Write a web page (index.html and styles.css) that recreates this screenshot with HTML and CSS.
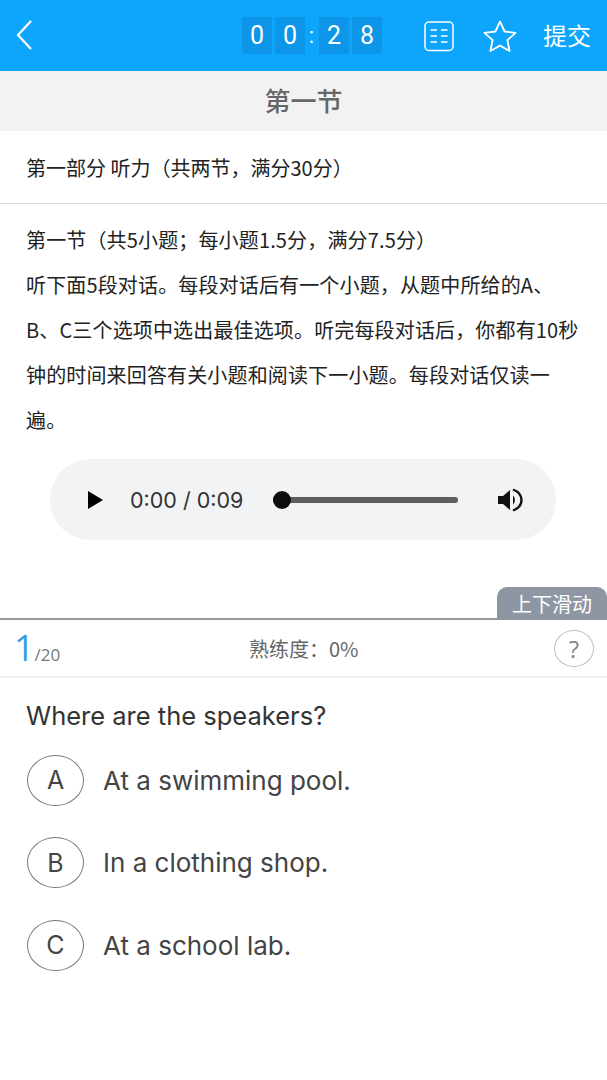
FILE: index.html
```html
<!DOCTYPE html>
<html lang="zh">
<head>
<meta charset="utf-8">
<title>第一节</title>
<link rel="stylesheet" href="styles.css">
</head>
<body>
<header class="topbar">
  <svg class="back" width="18" height="32" viewBox="0 0 18 32"><path d="M16 2 3 16 16 30" fill="none" stroke="#fff" stroke-width="2.200"/></svg>
  <div class="timer">
    <span class="digit">0</span><span class="digit">0</span><span class="colon">:</span><span class="digit">2</span><span class="digit">8</span>
  </div>
  <svg class="sheet" width="32" height="32" viewBox="0 0 32 32"><rect x="2" y="2" width="28" height="28.500" rx="4" fill="none" stroke="#fff" stroke-width="1.500"/><path d="M7.500 10h6.500M18 10h6.500M7.500 16h6.500M18 16h6.500M7.500 22h6.500M18 22h6.500" stroke="#fff" stroke-width="1.500"/></svg>
  <svg class="star" width="36" height="34" viewBox="0 0 36 34"><path d="M18 2.500 22.600 12.500 33.500 13.800 25.400 21.200 27.600 32 18 26.600 8.400 32 10.600 21.200 2.500 13.800 13.400 12.500Z" fill="none" stroke="#fff" stroke-width="1.800" stroke-linejoin="round"/></svg>
  <span class="submit">提交</span>
</header>

<div class="section-title">第一节</div>

<div class="part">第一部分 听力（共两节，满分30分）</div>

<section class="passage">
  <p>第一节（共5小题；每小题1.5分，满分7.5分）</p>
  <p>听下面5段对话。每段对话后有一个小题，从题中所给的A、</p>
  <p>B、C三个选项中选出最佳选项。听完每段对话后，你都有10秒</p>
  <p>钟的时间来回答有关小题和阅读下一小题。每段对话仅读一</p>
  <p>遍。</p>
  <div class="player">
    <svg class="play" width="16" height="18" viewBox="0 0 16 18"><path d="M0 0 15 9 0 18Z" fill="#000"/></svg>
    <span class="time">0:00 / 0:09</span>
    <div class="track"><span class="thumb"></span></div>
    <svg class="volume" width="26" height="24" viewBox="0 0 26 24"><path d="M1 8h5l7-6v20l-7-6H1Z" fill="#111"/><path d="M16 7.500c2.500 2.500 2.500 6.500 0 9Z" fill="#111"/><path d="M16 1.500c6.500 2.500 8.500 7 8.500 10.500s-2 8-8.500 10.500" fill="none" stroke="#111" stroke-width="2.400"/></svg>
  </div>
</section>

<div class="divider">
  <span class="handle">上下滑动</span>
</div>

<div class="status">
  <div class="count"><span class="current">1</span><span class="total">/20</span></div>
  <div class="mastery">熟练度：0%</div>
  <div class="help">?</div>
</div>

<main class="question">
  <h2 class="stem">Where are the speakers?</h2>
  <div class="option"><span class="letter">A</span><span class="text">At a swimming pool.</span></div>
  <div class="option"><span class="letter">B</span><span class="text">In a clothing shop.</span></div>
  <div class="option"><span class="letter">C</span><span class="text">At a school lab.</span></div>
</main>
</body>
</html>
```
FILE: styles.css
```css
* { box-sizing: border-box; }
html, body { margin: 0; padding: 0; }
body {
  width: 607px;
  height: 1080px;
  overflow: hidden;
  background: #fff;
  color: #222;
  font-family: "Noto Sans CJK SC", "Noto Sans", sans-serif;
}
.topbar {
  height: 71px;
  background: #0ea5fd;
  display: flex;
  align-items: center;
  padding: 0 14px 0 15px;
  color: #fff;
}
.back { flex: none; margin-top: -2px; }
.timer {
  display: flex;
  align-items: center;
  margin-left: 209px;
  font-family: Roboto, sans-serif;
  font-size: 25px;
}
.digit {
  width: 30px;
  height: 37px;
  margin-right: 3px;
  background: #0d96e8;
  border-radius: 2px;
  display: flex;
  align-items: center;
  justify-content: center;
}
.colon { width: 9px; margin-right: 3px; margin-left: -1px; font-size: 22px; text-align: center; }
.digit:last-child { margin-right: 0; }
.sheet { margin-left: 41px; flex: none; }
.star { margin-left: 27px; flex: none; }
.submit { margin-left: 25px; font-size: 24px; line-height: 1; margin-top: -2px; }
.section-title {
  height: 60px;
  padding-bottom: 3px;
  background: #f2f2f2;
  display: flex;
  align-items: center;
  justify-content: center;
  font-size: 26px;
  font-weight: 500;
  color: #666;
}
.part {
  height: 73px;
  padding: 0 26px;
  display: flex;
  align-items: center;
  font-size: 20px;
  border-bottom: 1px solid #dcdcdc;
}
.passage { padding: 13px 26px 0; height: 414px; }
.passage p {
  margin: 0;
  height: 45px;
  line-height: 45px;
  font-size: 20px;
  letter-spacing: 0.15px;
  white-space: nowrap;
}
.player {
  width: 506px;
  height: 81px;
  margin: 17px 0 0 24px;
  border-radius: 41px;
  background: #f1f3f4;
  display: flex;
  align-items: center;
  padding: 0 33px 0 38px;
}
.play { flex: none; }
.time {
  margin-left: 26px;
  width: 115px;
  white-space: nowrap;
  font-family: Inter, sans-serif;
  font-size: 21.500px;
  font-weight: 400;
  color: #333;
}
.track {
  position: relative;
  margin-left: 28px;
  width: 185px;
  height: 6px;
  border-radius: 3px;
  background: #5e5e5e;
}
.thumb {
  position: absolute;
  left: 0;
  top: -6px;
  width: 18px;
  height: 18px;
  border-radius: 50%;
  background: #0d0d0d;
}
.volume { margin-left: auto; flex: none; }
.divider {
  height: 2px;
  background: #9a9a9a;
  position: relative;
}
.handle {
  position: absolute;
  right: 0;
  bottom: 0;
  width: 110px;
  height: 33px;
  background: #8e95a3;
  border-radius: 10px 10px 0 0;
  color: #fff;
  font-size: 20px;
  display: flex;
  align-items: center;
  justify-content: center;
}
.status {
  height: 58px;
  border-bottom: 2px solid #eeeeee;
  display: flex;
  align-items: center;
  padding: 0 13px 0 14px;
  position: relative;
}
.count { display: flex; align-items: baseline; width: 235px; }
.current { font-family: "Open Sans", sans-serif; font-size: 36px; color: #3a9fdf; line-height: 1; }
.total { font-family: "Open Sans", sans-serif; font-size: 17px; color: #777; margin-left: 0; }
.mastery { font-size: 20px; color: #666; }
.help {
  margin-left: auto;
  width: 40px;
  height: 37px;
  border: 1px solid #bdbdbd;
  border-radius: 50%;
  display: flex;
  align-items: center;
  justify-content: center;
  font-family: "Open Sans", sans-serif;
  font-size: 24px;
  color: #888;
}
.question { padding: 0 26px; }
.stem {
  margin: 0;
  padding-top: 20px;
  height: 61px;
  font-family: Inter, sans-serif;
  font-size: 25.500px;
  line-height: 36px;
  font-weight: 400;
  color: #333;
}
.option {
  display: flex;
  align-items: center;
  height: 82.500px;
  padding-left: 1px;
}
.letter {
  width: 57px;
  height: 51px;
  border: 1px solid #777;
  border-radius: 50%;
  display: flex;
  align-items: center;
  justify-content: center;
  font-family: Inter, sans-serif;
  font-weight: 400;
  font-size: 25px;
  color: #444;
}
.text {
  margin-left: 19px;
  font-family: Inter, sans-serif;
  font-weight: 400;
  font-size: 26px;
  color: #444;
}
```
